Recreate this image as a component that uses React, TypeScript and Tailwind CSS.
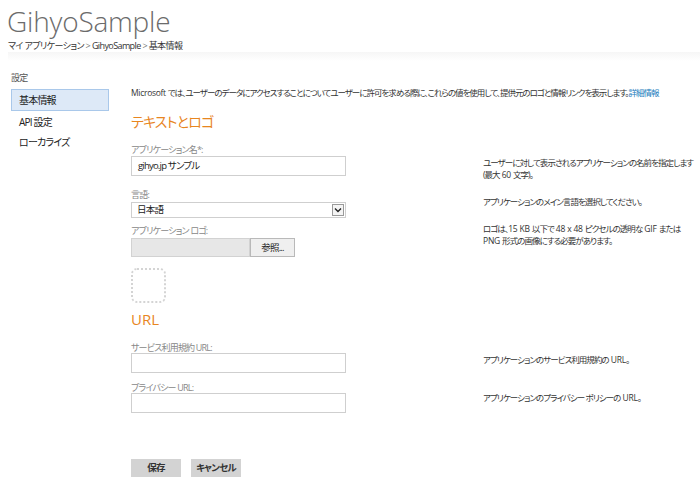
import React from 'react';

const jp = "font-['Open_Sans','Noto_Sans_CJK_JP',sans-serif] [font-feature-settings:'palt'] tracking-[-0.8px]";

const Label = ({ children }: { children: React.ReactNode }) => (
  <div className="text-[9px] leading-[12px] text-[#888]">{children}</div>
);

// 英数字は詰めすぎない
const L = ({ children }: { children: React.ReactNode }) => (
  <span className="tracking-[-0.2px] whitespace-pre">{children}</span>
);

const Hint = ({ children, className = '' }: { children: React.ReactNode; className?: string }) => (
  <div className={`whitespace-nowrap text-[8.5px] leading-[11.5px] tracking-[-0.95px] text-[#333] ${className}`}>{children}</div>
);

const TextBox = ({ value = '' }: { value?: string }) => (
  <div className="w-[215px] h-[20px] border border-[#cfcfcf] bg-white px-[6px] text-[9.5px] leading-[18px] text-[#222]">
    {value}
  </div>
);

const App = () => {
  return (
    <div className={`w-[700px] h-[490px] bg-white overflow-hidden ${jp}`}>
      {/* ヘッダー */}
      <div className="pl-[7px] pt-[4px]">
        <h1 className="text-[28px] leading-[34px] font-light text-[#6b6b6b] tracking-[-0.2px]">GihyoSample</h1>
        <div className="mt-[2px] text-[9px] leading-[12px] text-[#333] pl-[1px] tracking-[-0.6px]">
          マイ アプリケーション <span className="text-[#777]">&gt;</span> GihyoSample <span className="text-[#777]">&gt;</span> 基本情報
        </div>
      </div>
      <div className="ml-[8px] h-[9px] bg-gradient-to-b from-[#f6f6f6] to-white" />

      <div className="flex">
        {/* サイドバー */}
        <div className="w-[131px] shrink-0 pl-[11px] pr-[22px] pt-[11px]">
          <div className="text-[9px] leading-[12px] text-[#555]">設定</div>
          <div className="mt-[5px] h-[22px] border border-[#a9c8ea] bg-[#dde9f7] pl-[7px] text-[10px] leading-[20px] text-[#222]">基本情報</div>
          <div className="h-[20px] pl-[8px] text-[10px] leading-[22px] text-[#222]">API 設定</div>
          <div className="h-[20px] pl-[8px] text-[10px] leading-[22px] text-[#222]">ローカライズ</div>
        </div>

        {/* メイン */}
        <div className="flex-1 min-w-0 pt-[26px]">
          <p className="text-[8.5px] leading-[12px] text-[#333] whitespace-nowrap tracking-[-1px]">
            <span className="tracking-[-0.3px]">Microsoft </span>では、ユーザーのデータにアクセスすることについてユーザーに許可を求める際に、これらの値を使用して、提供元のロゴと情報リンクを表示します。
            <span className="text-[#1b7dbd]">詳細情報</span>
          </p>

          <h2 className="mt-[14px] text-[14px] leading-[18px] text-[#e8861f]">テキストとロゴ</h2>

          <div className="mt-[13px] flex h-[32px]">
            <div className="w-[352px] shrink-0">
              <Label>アプリケーション名*:</Label>
              <TextBox value="gihyo.jp サンプル" />
            </div>
            <Hint className="mt-[13px]">
              ユーザーに対して表示されるアプリケーションの名前を指定します<br />
              (最大<L> 60 </L>文字)。
            </Hint>
          </div>

          <div className="mt-[13px] flex h-[29px]">
            <div className="w-[352px] shrink-0">
              <Label>言語:</Label>
              <div className="mt-[1px] w-[215px] h-[16px] border border-[#cfcfcf] bg-white flex items-center justify-between pl-[5px] pr-[1px]">
                <span className="text-[9.5px] leading-[14px] text-[#222]">日本語</span>
                <span className="w-[12px] h-[12px] border border-[#9a9a9a] bg-[#f4f4f4] flex items-center justify-center">
                  <svg width="8" height="6" viewBox="0 0 8 6"><path d="M1 1.5 L4 4.5 L7 1.5" fill="none" stroke="#222" strokeWidth="1.4" /></svg>
                </span>
              </div>
            </div>
            <Hint className="mt-[7px]">アプリケーションのメイン言語を選択してください。</Hint>
          </div>

          <div className="mt-[7px] flex h-[32px]">
            <div className="w-[352px] shrink-0">
              <Label>アプリケーション ロゴ:</Label>
              <div className="mt-[1px] flex h-[19px]">
                <div className="w-[119px] border border-[#d2d2d2] bg-[#e7e7e7]" />
                <div className="w-[45px] border border-[#b9b9b9] bg-[#efefef] text-center text-[9.5px] leading-[17px] text-[#222]">参照...</div>
              </div>
            </div>
            <Hint className="-mt-[2px]">
              ロゴは、<L>15 KB </L>以下で<L> 48 x 48 </L>ピクセルの透明な<L> GIF </L>または<br />
              <L>PNG </L>形式の画像にする必要があります。
            </Hint>
          </div>

          <div className="mt-[11px] w-[35px] h-[35px] rounded-[6px] border-2 border-dotted border-[#d4d4d4]" />

          <h2 className="mt-[7px] text-[15px] leading-[18px] text-[#e8861f] tracking-normal">URL</h2>

          <div className="mt-[14px] flex h-[31px]">
            <div className="w-[352px] shrink-0">
              <Label>サービス利用規約 URL:</Label>
              <div className="-mt-[1px]"><TextBox /></div>
            </div>
            <Hint className="mt-[12px]">アプリケーションのサービス利用規約の<L> URL</L>。</Hint>
          </div>

          <div className="mt-[9px] flex h-[31px]">
            <div className="w-[352px] shrink-0">
              <Label>プライバシー URL:</Label>
              <div className="-mt-[1px]"><TextBox /></div>
            </div>
            <Hint className="mt-[10px]">アプリケーションのプライバシー ポリシーの<L> URL</L>。</Hint>
          </div>

          <div className="mt-[46px] flex gap-[10px]">
            <button className="w-[50px] h-[18px] bg-[#d3d3d3] text-[9.5px] leading-[18px] font-bold text-[#333]">保存</button>
            <button className="w-[50px] h-[18px] bg-[#d3d3d3] text-[9.5px] leading-[18px] font-bold text-[#333]">キャンセル</button>
          </div>
        </div>
      </div>
    </div>
  );
};

export default App;
